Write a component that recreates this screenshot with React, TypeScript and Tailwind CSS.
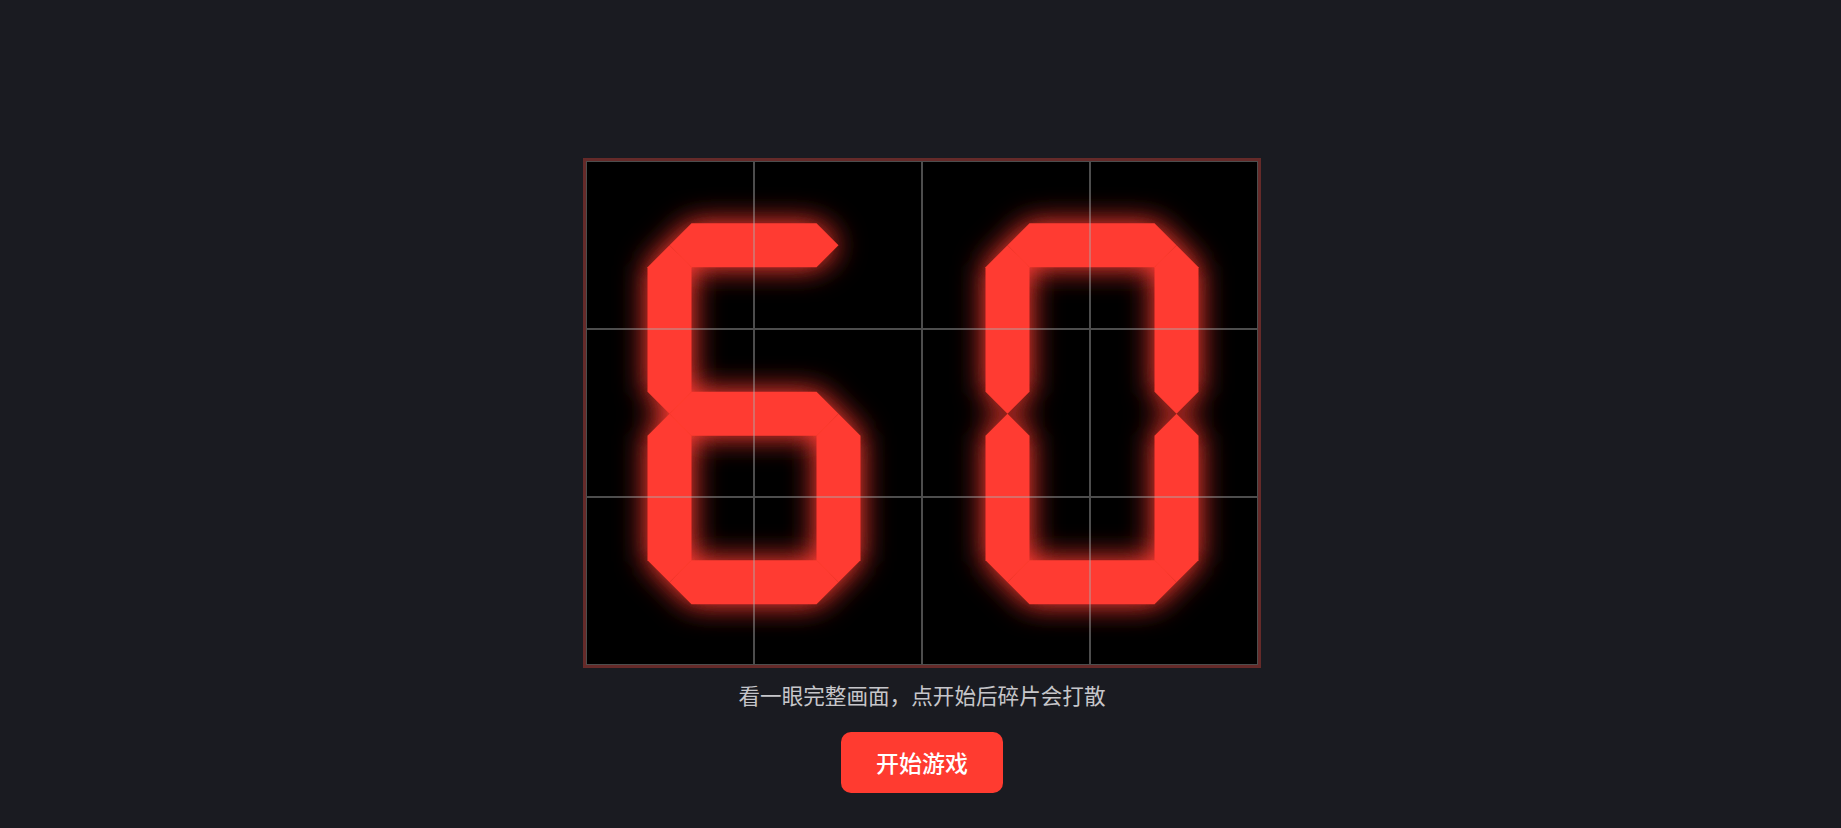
import React from "react";

const H = 22;
const RED = "#ff3b30";

function hseg(x1: number, x2: number, y: number) {
  return `${x1},${y} ${x1 + H},${y - H} ${x2 - H},${y - H} ${x2},${y} ${x2 - H},${y + H} ${x1 + H},${y + H}`;
}
function vseg(x: number, y1: number, y2: number) {
  return `${x},${y1} ${x + H},${y1 + H} ${x + H},${y2 - H} ${x},${y2} ${x - H},${y2 - H} ${x - H},${y1 + H}`;
}

function Digit({ cx, segs }: { cx: number; segs: string }) {
  const L = cx - 84.5;
  const R = cx + 84.5;
  const T = 84.3;
  const M = 252.8;
  const B = 421.3;
  const map: Record<string, string> = {
    a: hseg(L, R, T),
    b: vseg(R, T, M),
    c: vseg(R, M, B),
    d: hseg(L, R, B),
    e: vseg(L, M, B),
    f: vseg(L, T, M),
    g: hseg(L, R, M),
  };
  return (
    <g filter="url(#glow)">
      {segs.split("").map((s) => (
        <polygon key={s} points={map[s]} fill={RED} />
      ))}
    </g>
  );
}

export default function App() {
  const tiles = Array.from({ length: 12 });
  return (
    <div
      className="min-h-screen w-full bg-[#1a1b21] flex flex-col items-center pt-[158px] pl-[3px]"
      style={{ fontFamily: '"Noto Sans CJK SC", "Noto Sans", sans-serif' }}
    >
      <div className="border-[3px] border-[#652a29] bg-black">
        <div className="relative w-[672px] h-[504px]">
          <svg width="672" height="504" viewBox="0 0 672 504" className="block">
            <defs>
              <filter id="glow" x="-40%" y="-40%" width="180%" height="180%">
                <feGaussianBlur in="SourceGraphic" stdDeviation="15" result="b" />
                <feComponentTransfer in="b" result="bb">
                  <feFuncA type="linear" slope="1.15" />
                </feComponentTransfer>
                <feMerge>
                  <feMergeNode in="bb" />
                  <feMergeNode in="SourceGraphic" />
                </feMerge>
              </filter>
            </defs>
            <rect x="0" y="0" width="672" height="504" fill="#000" />
            <Digit cx={168} segs="acdefg" />
            <Digit cx={506} segs="abcdef" />
          </svg>
          <div className="absolute inset-0 grid grid-cols-4 grid-rows-3">
            {tiles.map((_, i) => (
              <div key={i} className="border border-[rgba(170,170,170,0.45)]" />
            ))}
          </div>
        </div>
      </div>
      <p className="mt-[11px] text-[21.6px] leading-[32px] text-[#c6c6ca]">
        看一眼完整画面，点开始后碎片会打散
      </p>
      <button className="mt-[21px] w-[162px] h-[61px] rounded-[10px] bg-[#ff3b30] text-white text-[23px] font-medium flex items-center justify-center">
        开始游戏
      </button>
    </div>
  );
}
